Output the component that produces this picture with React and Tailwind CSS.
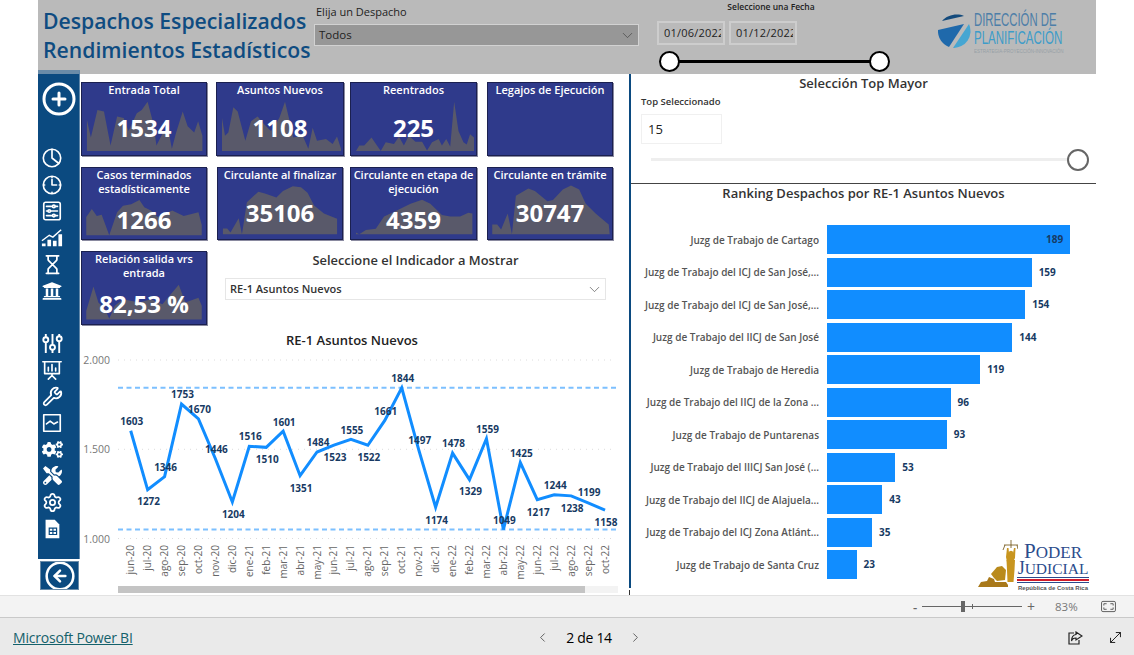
import React from 'react';
import { ChevronDown, ChevronLeft, ChevronRight, CircleArrowLeft, CirclePlus, Hourglass, MoveDiagonal, Settings, Wrench } from 'lucide-react';
import { FaCogs, FaTools, FaUniversity } from 'react-icons/fa';

// puntos de los sparklines, en escala 3x de la tarjeta (378x222)
const tarjetas = [
  [
    { titulo: ['Entrada Total'], valor: '1534', w: 'w-[126px] h-[74px]', pts: '15,113 27,168 47,83 67,88 87,193 107,103 127,108 142,148 167,93 182,83 200,58 217,123 227,193 247,153 262,138 274,203 287,153 307,88 322,133 342,153 354,118 367,163 367,210 15,210' },
    { titulo: ['Asuntos Nuevos'], valor: '1108', w: 'w-[128px] h-[74px]', pts: '15,108 24,163 34,153 49,75 62,88 85,178 102,118 122,103 142,128 162,148 187,108 204,58 217,113 229,168 257,163 274,203 287,138 300,178 327,173 347,188 360,165 372,203 372,210 15,210' },
    { titulo: ['Reentrados'], valor: '225', w: 'w-[127px] h-[74px]', pts: '15,210 25,193 40,193 62,168 90,210 105,183 130,188 145,166 160,193 175,163 195,181 215,181 230,208 245,183 265,173 275,193 288,173 300,196 312,58 325,148 340,183 350,190 360,158 372,168 372,210' },
    { titulo: ['Legajos de Ejecución'], valor: '', w: 'w-[126px] h-[74px]', pts: '' },
  ],
  [
    { titulo: ['Casos terminados', 'estadísticamente'], valor: '1266', w: 'w-[126px] h-[73px]', pts: '13,153 30,128 45,150 60,146 83,210 107,138 125,118 150,113 175,100 190,123 210,133 230,153 275,133 310,150 355,138 365,178 365,210 13,210' },
    { titulo: ['Circulante al finalizar'], valor: '35106', w: 'w-[126px] h-[73px] ml-px', pts: '15,189 28,189 38,202 63,157 73,207 88,107 123,74 143,80 178,92 198,72 228,57 253,60 273,77 293,117 323,142 363,159 363,207 15,207' },
    { titulo: ['Circulante en etapa de', 'ejecución'], valor: '4359', w: 'w-[127px] h-[73px]', pts: '15,202 25,207 45,194 75,190 100,152 140,132 180,112 215,99 240,112 275,147 300,152 330,152 355,140 367,142 367,207 15,207' },
    { titulo: ['Circulante en trámite'], valor: '30747', w: 'w-[126px] h-[73px]', pts: '13,177 28,177 40,192 60,142 73,207 85,87 123,64 143,72 181,104 198,100 228,67 253,55 278,67 298,112 328,142 368,177 371,207 13,207' },
  ],
];

const relacion = { titulo: ['Relación salida vrs', 'entrada'], valor: '82,53 %', w: 'w-[126px] h-[74px]', pts: '13,181 35,106 50,156 70,176 83,206 100,166 125,146 175,156 210,146 245,161 295,101 315,156 355,141 365,166 365,208 13,208' };

// [mes, valor, centro y de la etiqueta]
const serie = [
  ['jun-20', 1603, 421], ['jul-20', 1272, 501], ['ago-20', 1346, 467], ['sep-20', 1753, 394], ['oct-20', 1670, 409],
  ['nov-20', 1446, 449], ['dic-20', 1204, 514], ['ene-21', 1516, 436], ['feb-21', 1510, 459], ['mar-21', 1601, 422],
  ['abr-21', 1351, 488], ['may-21', 1484, 442], ['jun-21', 1523, 457], ['jul-21', 1555, 430], ['ago-21', 1522, 457],
  ['sep-21', 1661, 411], ['oct-21', 1844, 378], ['nov-21', 1497, 440], ['dic-21', 1174, 520], ['ene-22', 1478, 443],
  ['feb-22', 1329, 491], ['mar-22', 1559, 429], ['abr-22', 1049, 520], ['may-22', 1425, 453], ['jun-22', 1217, 512],
  ['jul-22', 1244, 485], ['ago-22', 1238, 508], ['sep-22', 1199, 492], ['oct-22', 1158, 522],
];

const ranking = [
  ['Juzg de Trabajo de Cartago', 189],
  ['Juzg de Trabajo del ICJ de San José,...', 159],
  ['Juzg de Trabajo del ICJ de San José,...', 154],
  ['Juzg de Trabajo del IICJ de San José', 144],
  ['Juzg de Trabajo de Heredia', 119],
  ['Juzg de Trabajo del IICJ de la Zona ...', 96],
  ['Juzg de Trabajo de Puntarenas', 93],
  ['Juzg de Trabajo del IIICJ San José (...', 53],
  ['Juzg de Trabajo del IICJ de Alajuela...', 43],
  ['Juzg de Trabajo del ICJ Zona Atlánt...', 35],
  ['Juzg de Trabajo de Santa Cruz', 23],
];

const xMes = (i) => 130.7 + i * 16.94;
const yValor = (v) => 360 + (2000 - v) * 0.1783;

function Tarjeta({ t }) {
  return (
    <div className={`${t.w} relative bg-[#2f3a8b] border border-[#1b2050] shadow-[1px_1px_0_#8a8aa0] flex flex-col items-center text-white overflow-hidden`}>
      {t.pts && (
        <svg viewBox="0 0 378 222" preserveAspectRatio="none" className="absolute inset-0 w-full h-full">
          <polygon points={t.pts} fill="#59596a" />
        </svg>
      )}
      <div className="relative text-center text-[11px] leading-[14px] font-semibold whitespace-nowrap">
        {t.titulo.map((l) => <div key={l}>{l}</div>)}
      </div>
      {t.valor && (
        <div className={`relative text-[24px] leading-[28px] font-bold ${t.titulo.length > 1 ? 'mt-[10px]' : 'mt-[17px]'}`}>{t.valor}</div>
      )}
    </div>
  );
}

function Ic({ children }) {
  return <svg viewBox="0 0 24 24" width="22" height="22" fill="none" stroke="white" strokeWidth="1.8" strokeLinecap="round" strokeLinejoin="round">{children}</svg>;
}

function BarraLateral() {
  const slot = 'w-[28px] self-start h-[26.5px] flex items-center justify-center';
  return (
    <div className="w-[42px] shrink-0 -mt-[4px] flex flex-col">
      <div className="h-[489px] bg-[#0b4a80] border-t-[4px] border-[#6a8ba8] border-r border-r-[#5f86a8] flex flex-col items-center text-white">
        <div className="h-[48px] mt-[1px] flex items-center justify-center"><CirclePlus size={36} strokeWidth={2} /></div>
        <div className="mt-[22px]" />
        <div className={slot}><Ic><circle cx="12" cy="12" r="9.5" /><path d="M12 2.5V12l7.5 6" /></Ic></div>
        <div className={slot}><Ic><circle cx="12" cy="12" r="9.5" /><path d="M12 6v6h5" /><path d="M12 3.5v.5M12 20v.5M3.5 12H4M20 12h.5" /></Ic></div>
        <div className={slot}><Ic><rect x="3" y="2.5" width="18" height="19" rx="2" /><path d="M6 7h12M6 12h12M6 17h12" /><circle cx="14" cy="7" r="1.4" fill="#0b4a80" /><circle cx="9" cy="12" r="1.4" fill="#0b4a80" /><circle cx="14" cy="17" r="1.4" fill="#0b4a80" /></Ic></div>
        <div className={slot}><svg viewBox="0 0 24 24" width="22" height="22" fill="white"><path d="M1 15 L9 9 L13 11 L22 3" fill="none" stroke="white" strokeWidth="1.6" /><path d="M1 21h4v-3H1zM7 21h4v-7H7zM13 21h4v-6h-4zM19 21h4V8h-4z" /></svg></div>
        <div className={slot}><Hourglass size={21} strokeWidth={2} /></div>
        <div className={slot}><FaUniversity size={20} /></div>
        <div className="mt-[26px]" />
        <div className={slot}><svg viewBox="0 0 24 24" width="23" height="23" fill="none" stroke="white" strokeWidth="2"><path d="M5 2v20M12 2v20M19 2v20" /><circle cx="5" cy="8" r="2.6" fill="#0b4a80" /><circle cx="12" cy="16" r="2.6" fill="#0b4a80" /><circle cx="19" cy="7" r="2.6" fill="#0b4a80" /></svg></div>
        <div className={slot}><Ic><path d="M2 3h20M4 3v13h16V3M12 16v2M8 22l4-4 4 4" /><path d="M8 13V9M12 13V6M16 13v-3" /></Ic></div>
        <div className={slot}><Wrench size={21} strokeWidth={2} /></div>
        <div className={slot}><Ic><rect x="3" y="3" width="18" height="18" /><path d="M6 13l4-3 4 3 4-2" /></Ic></div>
        <div className={slot}><FaCogs size={21} /></div>
        <div className={slot}><FaTools size={19} /></div>
        <div className={slot}><Settings size={21} strokeWidth={2} /></div>
        <div className={slot}><svg viewBox="0 0 24 24" width="22" height="22" fill="white"><path d="M5 2h10l5 5v15H5z" /><path d="M9 11h8v7H9zM13 11v7M9 14.5h8" fill="none" stroke="#0b4a80" strokeWidth="1.3" /></svg></div>
      </div>
      <div className="mt-[2px] ml-[2px] w-[39px] h-[29px] bg-[#0b4a80] border border-[#6a8ba8] flex items-center justify-center text-white overflow-hidden">
        <CircleArrowLeft size={32} strokeWidth={1.9} className="shrink-0" />
      </div>
    </div>
  );
}

function Grafico() {
  const linea = serie.map(([, v], i) => `${xMes(i)},${yValor(v)}`).join(' ');
  return (
    <svg viewBox="80 350 549 236" width="549" height="236" className="block">
      {[[360, '2.000'], [449.3, '1.500'], [538.5, '1.000']].map(([y, t]) => (
        <g key={t}>
          <line x1="118" x2="615" y1={y} y2={y} stroke="#dcdcdc" strokeWidth="1" strokeDasharray="1 5" />
          <text x="110" y={y + 4} textAnchor="end" fontSize="10.5" fill="#777">{t}</text>
        </g>
      ))}
      <line x1="118" x2="618" y1="387.7" y2="387.7" stroke="#7cc0ff" strokeWidth="2" strokeDasharray="5 3.5" />
      <line x1="118" x2="618" y1="529.5" y2="529.5" stroke="#7cc0ff" strokeWidth="2" strokeDasharray="5 3.5" />
      <polyline points={linea} fill="none" stroke="#118dff" strokeWidth="3" strokeLinejoin="miter" />
      {serie.map(([mes, v, ly], i) => (
        <g key={i}>
          <text x={xMes(i) + 3.5} y="545" textAnchor="end" fontSize="10" fill="#666" transform={`rotate(-90 ${xMes(i) + 3.5} 545)`}>{mes}</text>
          <text x={xMes(i) + 1} y={ly + 3.5} textAnchor="middle" fontSize="10" fontWeight="700" fill="#173a63">{v}</text>
        </g>
      ))}
    </svg>
  );
}

function LogoPlanificacion() {
  return (
    <div className="flex items-start ml-[52px] mt-[14px]">
      <svg viewBox="0 0 34 34" width="34" height="34">
        <path d="M5 7C10 1 20-1 27 2Z" fill="#134a7c" />
        <path d="M1 16L27 10 12 33A17 17 0 0 1 1 16Z" fill="#1f69ab" />
        <path d="M32 10A17 17 0 0 1 16 34Z" fill="#46a6d2" />
      </svg>
      <div className="ml-[3px] -mt-[2px] w-[90px] font-['Liberation_Sans',sans-serif]">
        <div className="text-[18px] leading-[17px] whitespace-nowrap origin-left scale-x-[0.63] text-[#4d7ea8]">DIRECCIÓN DE</div>
        <div className="text-[18px] leading-[18px] whitespace-nowrap origin-left scale-x-[0.64] text-[#3d9cc9]">PLANIFICACIÓN</div>
        <div className="text-[6px] leading-[8px] whitespace-nowrap origin-left scale-x-[0.75] text-[#96a0a6]">ESTRATEGIA-PROYECCIÓN-INNOVACIÓN</div>
      </div>
    </div>
  );
}

function Encabezado() {
  return (
    <div className="h-[74px] bg-[#bababa] flex shrink-0">
      <div className="w-[276px] pl-[5px] pt-[6px] text-[21.2px] leading-[29px] font-semibold text-[#0f4c81] whitespace-nowrap">
        <div>Despachos Especializados</div>
        <div>Rendimientos Estadísticos</div>
      </div>
      <div className="w-[325px]">
        <div className="ml-[2px] pt-[4px] h-[24px] text-[11px] leading-[16px] text-[#222]">Elija un Despacho</div>
        <div className="h-[22px] bg-[#979797] border border-[#d2d2d2] flex items-center justify-between pl-[4px] pr-[2px] text-[11.5px] text-[#222]">
          <span>Todos</span>
          <ChevronDown size={17} strokeWidth={1} className="text-[#444]" />
        </div>
      </div>
      <div className="w-[228px] ml-[18px]">
        <div className="mt-[1px] h-[12px] text-center text-[8.5px] leading-[12px] font-semibold text-[#222]">Seleccione una Fecha</div>
        <div className="mt-[8px] flex gap-[4px]">
          {['01/06/2022', '01/12/2022'].map((f) => (
            <div key={f} className="w-[68px] h-[24px] border-2 border-[#cdcdcd] pl-[5px]">
              <div className="w-[57px] overflow-hidden whitespace-nowrap text-[11px] tracking-[0.2px] leading-[20px] font-medium text-[#222]">{f}</div>
            </div>
          ))}
        </div>
        <div className="relative h-[29px]">
          <div className="absolute left-[13px] right-[6px] top-[15px] h-[3px] bg-black" />
          <div className="absolute left-[2px] top-[6px] w-[21px] h-[21px] rounded-full bg-white border-2 border-black" />
          <div className="absolute right-[-5px] top-[6px] w-[21px] h-[21px] rounded-full bg-white border-2 border-black" />
        </div>
      </div>
      <LogoPlanificacion />
    </div>
  );
}

function LogoPoder() {
  return (
    <div className="absolute left-[347px] top-[466px] w-[112px] h-[50px] flex">
      <svg viewBox="0 0 40 50" width="40" height="50" className="shrink-0" fill="#c8951f">
        <path d="M33 0V8M26 5H40M27 5l-2 5M39 5l1 4" stroke="#6d4f0e" strokeWidth="0.8" fill="none" />
        <path d="M28 17L29 8h1.5L31 13h4L36 8h1.5L37 18L35 22H29z" />
        <circle cx="33" cy="13" r="2.2" />
        <path d="M28.5 20h8.5l-.5 10-1 12h-6l-.5-12z" />
        <path d="M13 34l6-7 5-1 4 4-1 10-8 1-3-3z" fill="#b98a1c" />
        <path d="M0 47l3-5 6-1 2-4 5 2 1 3h11l2 3v2z" fill="#a9791a" />
      </svg>
      <div className="w-[72px] -ml-px font-['Liberation_Serif',serif] text-[#2b4c8c] text-center">
        <div className="mt-[3px] text-[17px] leading-[16px] whitespace-nowrap"><span className="text-[21px]">P</span>ODER</div>
        <div className="text-[15.5px] leading-[15px] whitespace-nowrap"><span className="text-[18px]">J</span>UDICIAL</div>
        <div className="mt-[1px] h-[1px] bg-[#2b4c8c]" />
        <div className="mt-[1px] h-[1.5px] bg-[#d21c2a]" />
        <div className="mt-[1px] h-[1px] bg-[#2b4c8c]" />
        <div className="mt-[1px] text-[6px] leading-[8px] font-bold font-['Liberation_Sans',sans-serif] text-[#555] whitespace-nowrap">República de Costa Rica</div>
      </div>
    </div>
  );
}

function PanelDerecho() {
  return (
    <div className="relative w-[465px] shrink-0 h-[521px]">
      <div className="h-[18px] text-center text-[13px] leading-[18px] font-semibold text-[#333]">Selección Top Mayor</div>
      <div className="mt-[4px] ml-[10px] h-[12px] text-[9.5px] leading-[12px] font-semibold text-[#333]">Top Seleccionado</div>
      <div className="mt-[6px] ml-[10px] w-[81px] h-[30px] border border-[#f0f0f0] pl-[6px] text-[13px] leading-[28px] font-medium text-[#222]">15</div>
      <div className="relative h-[39px]">
        <div className="absolute left-[20px] right-[18px] top-[14px] h-[3px] bg-[#eeeeee]" />
        <div className="absolute right-[7px] top-[5px] w-[22px] h-[22px] rounded-full bg-white border-2 border-[#666]" />
      </div>
      <div className="h-px bg-[#444]" />
      <div className="h-[18px] text-center text-[13px] leading-[18px] font-semibold text-[#333]">Ranking Despachos por RE-1 Asuntos Nuevos</div>
      <div className="mt-[23px] flex flex-col gap-[3.5px]">
        {ranking.map(([nombre, v], i) => (
          <div key={i} className="h-[29px] flex items-center">
            <div className="w-[188px] pt-px text-right text-[10px] font-semibold text-[#555] whitespace-nowrap">{nombre}</div>
            <div className="ml-[8px] h-full bg-[#118dff] flex items-center justify-end pr-[7px]" style={{ width: v * 1.287 }}>
              {i === 0 && <span className="text-[10px] font-bold text-[#173a63]">{v}</span>}
            </div>
            {i > 0 && <span className="ml-[7px] text-[10px] font-bold text-[#173a63]">{v}</span>}
          </div>
        ))}
      </div>
      <LogoPoder />
    </div>
  );
}

export default function App() {
  return (
    <div className="w-[1134px] h-[655px] bg-white flex flex-col overflow-hidden font-['Open_Sans',sans-serif]">
      <div className="h-[595px] pl-[38px] shrink-0">
        <div className="w-[1058px]">
          <Encabezado />
          <div className="flex">
            <BarraLateral />
            <div className="w-[549px] shrink-0 pt-[8px] pl-px">
              {tarjetas.map((fila, n) => (
                <div key={n} className="grid grid-cols-[135px_134px_137px_126px] mb-[11px]">
                  {fila.map((t) => <Tarjeta key={t.titulo[0]} t={t} />)}
                </div>
              ))}
              <div className="flex">
                <Tarjeta t={relacion} />
                <div className="ml-[18px] w-[381px]">
                  <div className="h-[18px] text-center text-[12.9px] leading-[18px] font-semibold text-[#333]">Seleccione el Indicador a Mostrar</div>
                  <div className="mt-[9px] h-[22px] border border-[#e6e6e6] flex items-center justify-between pl-[4px] pr-[2px] text-[11px] font-semibold text-[#333]">
                    <span>RE-1 Asuntos Nuevos</span>
                    <ChevronDown size={17} strokeWidth={1} className="text-[#555]" />
                  </div>
                </div>
              </div>
              <div className="-ml-px">
                <div className="mt-[7px] h-[18px] pr-[5px] text-center text-[13px] leading-[17px] font-semibold text-[#222]">RE-1 Asuntos Nuevos</div>
                <Grafico />
                <div className="ml-[38px] w-[500px] h-[7px] bg-[#f3f3f3]">
                  <div className="w-[467px] h-full bg-[#c4c4c4]" />
                </div>
              </div>
            </div>
            <div className="w-[2px] shrink-0 flex flex-col">
              <div className="h-[514px] bg-[#0b4a80]" />
              <div className="mt-[2px] w-px h-[5px] bg-[#333]" />
            </div>
            <PanelDerecho />
          </div>
        </div>
      </div>

      <div className="h-[23px] shrink-0 bg-[#f3f3f3] border-t border-b border-t-[#e2e2e2] border-b-[#c9c9c9] flex items-center pl-[913px] text-[#666]">
        <span className="w-[9px] text-[13px] leading-[20px] font-semibold">-</span>
        <div className="relative w-[100px] h-px bg-[#666]">
          <div className="absolute left-[39px] -top-[5px] w-[4px] h-[11px] bg-[#666]" />
          <div className="absolute left-[50px] -top-[2px] w-px h-[5px] bg-[#666]" />
        </div>
        <span className="ml-[5px] w-[12px] text-[14px] leading-[20px]">+</span>
        <span className="ml-[16px] w-[26px] text-[11.5px] leading-[20px] text-[#777]">83%</span>
        <svg viewBox="0 0 16 14" width="15" height="13" fill="none" stroke="#555" strokeWidth="1" className="ml-[20px]">
          <rect x="0.5" y="1.5" width="15" height="11" rx="1.5" />
          <path d="M3 6V4h3M10 4h3v2M13 8v2h-3M6 10H3V8" />
        </svg>
      </div>

      <div className="flex-1 bg-[#eaeaea] flex items-center relative text-[14px] pt-[2px]">
        <a className="ml-[13px] text-[#14616b] underline whitespace-nowrap tracking-[-0.2px]">Microsoft Power BI</a>
        <div className="absolute left-[535px] w-[108px] flex items-center justify-between text-black">
          <ChevronLeft size={15} strokeWidth={1.3} className="text-[#444]" />
          <span className="font-medium tracking-[-0.3px]">2 de 14</span>
          <ChevronRight size={15} strokeWidth={1.3} className="text-[#444]" />
        </div>
        <div className="absolute left-[1067px] flex items-center gap-[24px] text-[#222]">
          <svg viewBox="0 0 16 16" width="16" height="16" fill="none" stroke="currentColor" strokeWidth="1.2">
            <path d="M7 3H2v11h10v-4" />
            <path d="M9 2l6 4-6 4V8C6 8 5 9 4.5 11 4.5 7 6 5 9 4.5z" />
          </svg>
          <MoveDiagonal size={17} strokeWidth={1.4} />
        </div>
      </div>
    </div>
  );
}
